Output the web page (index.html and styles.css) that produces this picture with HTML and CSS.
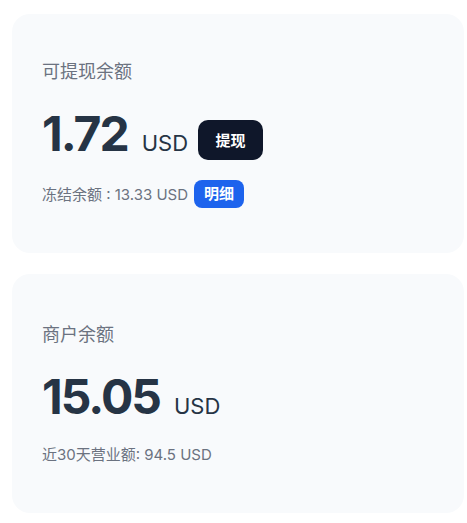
FILE: index.html
```html
<!DOCTYPE html>
<html lang="zh-CN">
<head>
    <meta charset="UTF-8">
    <meta name="viewport" content="width=device-width, initial-scale=1.0">
    <title>余额</title>
    <link rel="stylesheet" href="styles.css">
</head>
<body>

    <div class="wallet">
        <div class="card">
            <div class="card-title">可提现余额</div>
            <div class="amount-row">
                <span class="amount">1.72</span>
                <span class="currency">USD</span>
                <button class="btn-withdraw">提现</button>
            </div>
            <div class="card-sub">
                <span>冻结余额 : 13.33 USD</span>
                <a class="badge" href="#">明细</a>
            </div>
        </div>

        <div class="card">
            <div class="card-title">商户余额</div>
            <div class="amount-row">
                <span class="amount">15.05</span>
                <span class="currency">USD</span>
            </div>
            <div class="card-sub">
                <span>近30天营业额: 94.5 USD</span>
            </div>
        </div>
    </div>

</body>
</html>
```

FILE: styles.css
```css
body {
    font-family: Inter, "Noto Sans CJK SC", sans-serif;
    margin: 0;
    padding: 14px 3px 10px 12px;
    background-color: #fff;
}

.wallet {
    display: flex;
    flex-direction: column;
    gap: 21px;
}

.card {
    height: 239px;
    box-sizing: border-box;
    padding: 0 30px;
    background-color: #f8fafc;
    border-radius: 18px;
    display: flex;
    flex-direction: column;
    justify-content: center;
}

.card-title {
    font-size: 18px;
    line-height: 24px;
    color: #6b7280;
}

.amount-row {
    display: flex;
    align-items: baseline;
    margin-top: 24px;
    color: #263445;
}

.amount {
    font-size: 48px;
    font-weight: 700;
    line-height: 52px;
    letter-spacing: -2px;
}

.currency {
    font-size: 22px;
    margin-left: 14px;
}

.btn-withdraw {
    align-self: center;
    margin: 12px 0 0 10px;
    width: 65px;
    height: 40px;
    border: none;
    border-radius: 10px;
    background-color: #0f172a;
    color: #fff;
    font-family: inherit;
    font-size: 15px;
    font-weight: 700;
    cursor: pointer;
}

.card-sub {
    display: flex;
    align-items: center;
    margin-top: 20px;
    font-size: 15px;
    color: #6b7280;
}

.badge {
    margin-left: 6px;
    padding: 0 10px;
    height: 28px;
    line-height: 28px;
    border-radius: 8px;
    background-color: #1d63ed;
    color: #fff;
    font-size: 15px;
    font-weight: 700;
    text-decoration: none;
}
```
